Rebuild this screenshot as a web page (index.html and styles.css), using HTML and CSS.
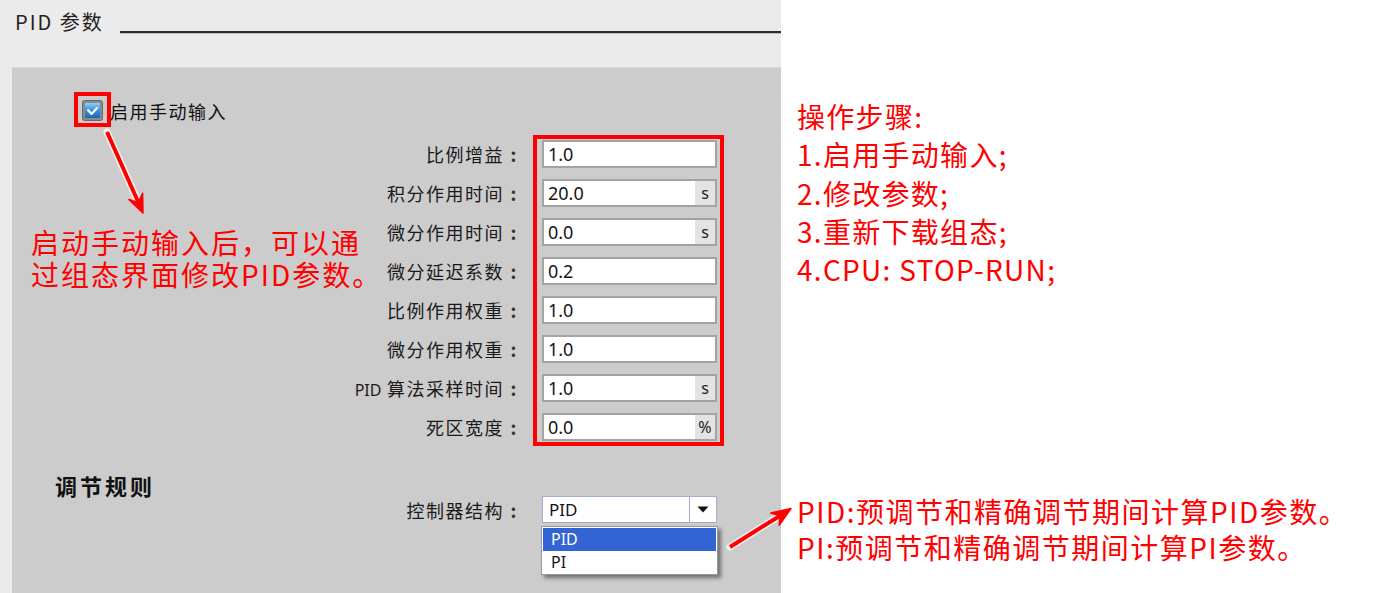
FILE: index.html
```html
<!DOCTYPE html>
<html lang="zh-CN">
<head>
<meta charset="utf-8">
<title>PID 参数</title>
<link rel="stylesheet" href="styles.css">
</head>
<body>
<div class="page">
  <div class="left">
    <div class="hdr">
      <span class="title">PID 参数</span>
      <span class="rule"></span>
    </div>
    <div class="panel">
      <div class="chk">
        <span class="cbox">
          <svg width="21" height="21" viewBox="0 0 21 21">
            <defs>
              <linearGradient id="cbg" x1="0" y1="0" x2="0" y2="1">
                <stop offset="0" stop-color="#8fd0ff"/>
                <stop offset="0.45" stop-color="#3b95e0"/>
                <stop offset="1" stop-color="#1c64b8"/>
              </linearGradient>
            </defs>
            <rect x="0.5" y="0.5" width="20" height="20" rx="2" fill="#8a8a8a" stroke="#6a6a6a"/>
            <rect x="3" y="3" width="15" height="15" rx="1" fill="url(#cbg)"/>
            <path d="M5.5 9.5 L9.5 14 L15.5 7.5" fill="none" stroke="#ffffff" stroke-width="2.2" stroke-linejoin="round"/>
          </svg>
        </span>
        <span class="chk-label">启用手动输入</span>
      </div>

      <div class="form">
        <div class="lbl">比例增益<span class="colon">:</span></div>
        <div class="field"><span class="val">1.0</span></div>

        <div class="lbl">积分作用时间<span class="colon">:</span></div>
        <div class="field"><span class="val">20.0</span><span class="unit">s</span></div>

        <div class="lbl">微分作用时间<span class="colon">:</span></div>
        <div class="field"><span class="val">0.0</span><span class="unit">s</span></div>

        <div class="lbl">微分延迟系数<span class="colon">:</span></div>
        <div class="field"><span class="val">0.2</span></div>

        <div class="lbl">比例作用权重<span class="colon">:</span></div>
        <div class="field"><span class="val">1.0</span></div>

        <div class="lbl">微分作用权重<span class="colon">:</span></div>
        <div class="field"><span class="val">1.0</span></div>

        <div class="lbl"><span class="lat">PID</span> 算法采样时间<span class="colon">:</span></div>
        <div class="field"><span class="val">1.0</span><span class="unit">s</span></div>

        <div class="lbl">死区宽度<span class="colon">:</span></div>
        <div class="field"><span class="val">0.0</span><span class="unit">%</span></div>
      </div>

      <div class="sect">调节规则</div>

      <div class="form form2">
        <div class="lbl">控制器结构<span class="colon">:</span></div>
        <div class="select">
          <span class="val">PID</span>
          <span class="btn">
            <svg width="12" height="7" viewBox="0 0 12 7"><path d="M0.5 0.5 H11.5 L6 6.5 Z" fill="#111"/></svg>
          </span>
          <div class="menu">
            <div class="opt sel">PID</div>
            <div class="opt">PI</div>
          </div>
        </div>
      </div>
    </div>
  </div>

  <div class="right">
    <div class="steps">
      <div>操作步骤:</div>
      <div>1.启用手动输入;</div>
      <div>2.修改参数;</div>
      <div>3.重新下载组态;</div>
      <div>4.CPU: STOP-RUN;</div>
    </div>
    <div class="notes">
      <div>PID:预调节和精确调节期间计算PID参数。</div>
      <div>PI:预调节和精确调节期间计算PI参数。</div>
    </div>
  </div>

  <div class="ann-left">启动手动输入后，可以通<br>过组态界面修改PID参数。</div>
  <div class="redbox rb-check"></div>
  <div class="redbox rb-fields"></div>

  <svg class="arrows" width="1378" height="593" viewBox="0 0 1378 593">
    <g class="halo" fill="none" stroke="#ffffff" stroke-opacity="0.75" stroke-width="7" stroke-linecap="round" stroke-linejoin="round">
      <path d="M107 132 L138.2 202"/>
      <path d="M730 547 L780 515.7"/>
    </g>
    <g fill="#ff0000" stroke="#ff0000">
      <path d="M107 132 L138.2 202" stroke-width="4" fill="none"/>
      <path d="M143 213 L128.8 199.5 L138.2 202.5 L142.6 193.2 Z" stroke-width="1.5" stroke-linejoin="round"/>
      <path d="M730 547 L780 515.7" stroke-width="4" fill="none"/>
      <path d="M791 508.5 L779.2 525.2 L780 515.9 L770.8 513 Z" stroke-width="1.5" stroke-linejoin="round"/>
    </g>
  </svg>
</div>
</body>
</html>
```

FILE: styles.css
```css
* { box-sizing: border-box; }

html, body {
  margin: 0;
  padding: 0;
  background: #ffffff;
}

.page {
  position: relative;
  width: 1378px;
  height: 593px;
  overflow: hidden;
  display: flex;
  font-family: "Noto Sans CJK SC", "Noto Sans", sans-serif;
}

/* ---------- left (screenshot of the config dialog) ---------- */
.left {
  width: 781px;
  background: #ebebeb;
  display: flex;
  flex-direction: column;
}

.hdr {
  height: 67px;
  display: flex;
  padding: 8px 0 0 15px;
}

.title {
  width: 105px;
  font-size: 20px;
  line-height: 28px;
  letter-spacing: 2px;
  color: #222;
}

.rule {
  flex: 1;
  height: 2px;
  margin-top: 23px;
  background: #2a2a2a;
  box-shadow: 0 1px 0 #bdbdbd;
}

.panel {
  flex: 1;
  margin-left: 12px;
  background: #cccccc;
  border-top: 1px solid #d8d8d8;
  padding-top: 32px;
}

.chk {
  display: flex;
  align-items: center;
  height: 21px;
  margin-left: 70px;
}

.cbox {
  width: 21px;
  height: 21px;
  display: block;
}
.cbox svg { display: block; }

.chk-label {
  margin-left: 7px;
  font-size: 18px;
  letter-spacing: 1.5px;
  color: #111;
}

.form {
  display: grid;
  grid-template-columns: 511px 175px;
  column-gap: 19px;
  row-gap: 11px;
  grid-auto-rows: 28px;
  margin-top: 19px;
  align-items: center;
}

.lbl {
  text-align: right;
  font-size: 18px;
  letter-spacing: 1.5px;
  color: #1a1a1a;
  white-space: nowrap;
}
.lbl .lat {
  font-family: "Noto Sans", sans-serif;
  letter-spacing: 0;
  font-size: 16px;
}
.lbl .colon {
  display: inline-block;
  width: 19px;
  text-align: center;
  letter-spacing: 0;
  font-weight: 700;
  color: #333;
}

.field {
  height: 28px;
  display: flex;
  align-items: stretch;
  background: #ffffff;
  border: 2px solid #a3a3a3;
}

.val {
  flex: 1;
  padding-left: 4px;
  font-family: "Noto Sans", sans-serif;
  font-size: 18px;
  line-height: 24px;
  color: #151515;
}

.unit {
  width: 20px;
  background: #e3e3e3;
  text-align: center;
  font-family: "Noto Sans", sans-serif;
  font-size: 16px;
  line-height: 24px;
  color: #222;
}

.sect {
  margin-top: 34px;
  padding-left: 43px;
  font-size: 22px;
  line-height: 21px;
  height: 21px;
  font-weight: 700;
  letter-spacing: 3px;
  color: #111;
}

.form2 {
  margin-top: 0;
  grid-auto-rows: 27px;
}

.select {
  position: relative;
  height: 27px;
  display: flex;
  background: #ffffff;
  border: 1px solid #a4acd0;
}
.select .val {
  padding-left: 6px;
  font-size: 17px;
  line-height: 25px;
}
.select .btn {
  width: 27px;
  border-left: 1px solid #a4acd0;
  display: flex;
  align-items: center;
  justify-content: center;
}
.select .btn svg { display: block; }

.menu {
  position: absolute;
  left: -2px;
  top: 29px;
  width: 177px;
  height: 49px;
  background: #ffffff;
  border: 1px solid #9a9a9a;
  box-shadow: 3px 3px 4px rgba(0, 0, 0, 0.45);
  padding: 1px 1px 0 1px;
}

.opt {
  height: 23px;
  padding-left: 8px;
  font-family: "Noto Sans", sans-serif;
  font-size: 16px;
  line-height: 23px;
  color: #151515;
}
.opt.sel {
  background: #3264d2;
  color: #ffffff;
}

/* ---------- right annotation column ---------- */
.right {
  flex: 1;
  background: #ffffff;
  padding-left: 16px;
  color: #ff0000;
  font-size: 28px;
}

.steps {
  margin-top: 97px;
  line-height: 38.3px;
  letter-spacing: 1.3px;
}

.notes {
  margin-top: 205px;
  line-height: 36px;
  letter-spacing: 1.5px;
}

/* ---------- overlays (annotations drawn on top) ---------- */
.ann-left {
  position: absolute;
  left: 31px;
  top: 226px;
  color: #ff0000;
  font-size: 28px;
  line-height: 32px;
  letter-spacing: 2px;
}

.redbox {
  position: absolute;
  border: 4px solid #ff0000;
}
.rb-check {
  left: 74px;
  top: 92px;
  width: 37px;
  height: 35px;
}
.rb-fields {
  left: 533px;
  top: 135px;
  width: 191px;
  height: 311px;
}

.arrows {
  position: absolute;
  left: 0;
  top: 0;
  pointer-events: none;
}
```
